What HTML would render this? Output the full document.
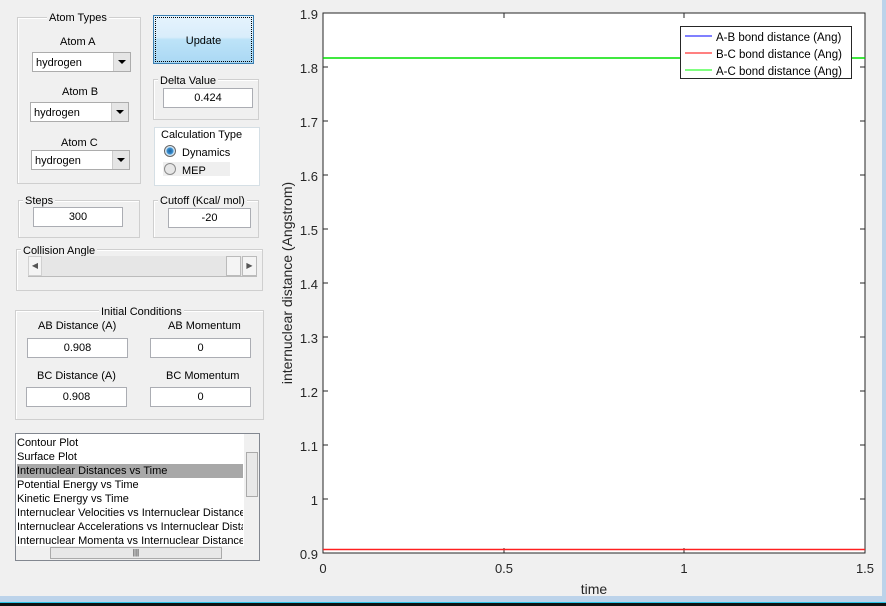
<!DOCTYPE html>
<html><head><style>
body{margin:0;width:886px;height:606px;background:#f0f0f0;font-family:"Liberation Sans",sans-serif;font-size:11px;color:#000;position:relative;overflow:hidden}
.a{position:absolute}
.g{position:absolute;border:1px solid #cfcfcf;box-shadow:inset 1px 1px 0 #fff}
.gt{position:absolute;background:#f0f0f0;padding:0 2px;white-space:nowrap}
.e{position:absolute;background:#fff;border:1px solid #abadb3;text-align:center;line-height:19px;height:18px}
.dd{position:absolute;background:#fff;border:1px solid #acacac;height:20px;line-height:21px;padding-left:3px;box-sizing:border-box}
.dd b{position:absolute;right:0;top:0;width:16px;height:18px;background:#e5e5e5;border-left:1px solid #ccc}
.dd b:after{content:"";position:absolute;left:4px;top:7px;border:4px solid transparent;border-top:4px solid #000;border-bottom:0}
.c{text-align:center}
</style></head><body>
<div class="g" style="left:17px;top:17px;width:122px;height:165px"></div>
<div class="gt" style="left:47px;top:12px">Atom Types</div>
<div class="a" style="left:60px;top:36px">Atom A</div>
<div class="dd" style="left:32px;top:52px;width:99px">hydrogen<b></b></div>
<div class="a" style="left:62px;top:86px">Atom B</div>
<div class="dd" style="left:30px;top:102px;width:99px">hydrogen<b></b></div>
<div class="a" style="left:61px;top:137px">Atom C</div>
<div class="dd" style="left:31px;top:150px;width:99px">hydrogen<b></b></div>
<div class="a c" style="left:153px;top:15px;width:101px;height:49px;border:1px solid #3c7fb1;background:linear-gradient(#e5f3fc 0,#d9edfb 45%,#bde3f8 50%,#aad8f4 100%);line-height:51px;box-sizing:border-box;outline:1px dotted #000;outline-offset:-3px">Update</div>
<div class="g" style="left:153px;top:79px;width:104px;height:39px"></div>
<div class="gt" style="left:158px;top:75px">Delta Value</div>
<div class="e" style="left:163px;top:88px;width:88px">0.424</div>
<div class="a" style="left:154px;top:127px;width:104px;height:57px;background:#fff;border:1px solid #d5dfe5"></div>
<div class="gt" style="left:159px;top:129px;background:#fff">Calculation Type</div>
<div class="a" style="left:164px;top:145px;width:12px;height:12px;border-radius:50%;background:radial-gradient(circle,#1d5f9a 0,#3a8fd0 3px,#cfe4f4 4px,#eee 6px);border:1px solid #666;box-sizing:border-box"></div>
<div class="a" style="left:182px;top:147px">Dynamics</div>
<div class="a" style="left:163px;top:162px;width:67px;height:14px;background:#efefef"></div>
<div class="a" style="left:164px;top:163px;width:12px;height:12px;border-radius:50%;background:#e6e6e6;border:1px solid #8a8a8a;box-sizing:border-box"></div>
<div class="a" style="left:182px;top:165px">MEP</div>
<div class="g" style="left:18px;top:200px;width:120px;height:36px"></div>
<div class="gt" style="left:23px;top:195px">Steps</div>
<div class="e" style="left:33px;top:207px;width:88px">300</div>
<div class="g" style="left:153px;top:200px;width:104px;height:36px"></div>
<div class="gt" style="left:158px;top:195px">Cutoff (Kcal/ mol)</div>
<div class="e" style="left:168px;top:208px;width:81px">-20</div>
<div class="g" style="left:16px;top:249px;width:245px;height:40px"></div>
<div class="gt" style="left:21px;top:245px">Collision Angle</div>
<div class="a" style="left:28px;top:256px;width:229px;height:20px;background:#e6e6e6;border-bottom:1px solid #bbb"></div>
<div class="a" style="left:28px;top:256px;width:14px;height:20px;background:#f4f4f4;border:1px solid #d0d0d0;box-sizing:border-box;font-size:8px;line-height:18px;text-align:center;color:#555">◀</div>
<div class="a" style="left:226px;top:256px;width:15px;height:20px;background:#f4f4f4;border:1px solid #bbb;box-sizing:border-box"></div>
<div class="a" style="left:242px;top:256px;width:15px;height:20px;background:#f4f4f4;border:1px solid #bbb;box-sizing:border-box;font-size:8px;line-height:18px;text-align:center;color:#555">▶</div>
<div class="g" style="left:15px;top:310px;width:247px;height:108px"></div>
<div class="gt" style="left:99px;top:306px">Initial Conditions</div>
<div class="a" style="left:38px;top:320px">AB Distance (A)</div>
<div class="a" style="left:168px;top:320px">AB Momentum</div>
<div class="e" style="left:27px;top:338px;width:99px">0.908</div>
<div class="e" style="left:150px;top:338px;width:99px">0</div>
<div class="a" style="left:37px;top:370px">BC Distance (A)</div>
<div class="a" style="left:166px;top:370px">BC Momentum</div>
<div class="e" style="left:26px;top:387px;width:99px">0.908</div>
<div class="e" style="left:150px;top:387px;width:99px">0</div>
<div class="a" style="left:15px;top:433px;width:245px;height:128px;background:#fff;border:1px solid #828790;box-sizing:border-box;overflow:hidden;line-height:14px">
<div style="position:absolute;left:1px;top:2px;width:226px;white-space:nowrap;overflow:hidden">
<div>Contour Plot</div><div>Surface Plot</div><div style="background:#a8a8a8">Internuclear Distances vs Time</div><div>Potential Energy vs Time</div><div>Kinetic Energy vs Time</div><div>Internuclear Velocities vs Internuclear Distance</div><div>Internuclear Accelerations vs Internuclear Distance</div><div>Internuclear Momenta vs Internuclear Distance</div></div>
<div style="position:absolute;left:228px;top:0;width:15px;height:112px;background:#f0f0f0"></div>
<div style="position:absolute;left:230px;top:18px;width:12px;height:45px;background:#e8e8e8;border:1px solid #aaa;box-sizing:border-box"></div>
<div style="position:absolute;left:0;top:112px;width:243px;height:14px;background:#f0f0f0"></div>
<div style="position:absolute;left:34px;top:113px;width:172px;height:12px;background:#e8e8e8;border:1px solid #aaa;box-sizing:border-box;font-size:8px;text-align:center;line-height:10px">|||</div>
</div>
<svg class="a" style="left:0;top:0" width="886" height="606" font-family="Liberation Sans, sans-serif" font-size="13">
<rect x="323" y="13" width="542" height="540" fill="#fff" stroke="#262626"/>
<g stroke="#262626">
<line x1="323" y1="67" x2="328" y2="67"/><line x1="323" y1="121" x2="328" y2="121"/><line x1="323" y1="175" x2="328" y2="175"/><line x1="323" y1="229" x2="328" y2="229"/><line x1="323" y1="283" x2="328" y2="283"/><line x1="323" y1="337" x2="328" y2="337"/><line x1="323" y1="391" x2="328" y2="391"/><line x1="323" y1="445" x2="328" y2="445"/><line x1="323" y1="499" x2="328" y2="499"/>
<line x1="865" y1="67" x2="860" y2="67"/><line x1="865" y1="121" x2="860" y2="121"/><line x1="865" y1="175" x2="860" y2="175"/><line x1="865" y1="229" x2="860" y2="229"/><line x1="865" y1="283" x2="860" y2="283"/><line x1="865" y1="337" x2="860" y2="337"/><line x1="865" y1="391" x2="860" y2="391"/><line x1="865" y1="445" x2="860" y2="445"/><line x1="865" y1="499" x2="860" y2="499"/>
<line x1="504" y1="553" x2="504" y2="548"/><line x1="684" y1="553" x2="684" y2="548"/><line x1="504" y1="13" x2="504" y2="18"/><line x1="684" y1="13" x2="684" y2="18"/>
</g>
<line x1="323" y1="58" x2="865" y2="58" stroke="#00e000" stroke-width="1.5"/>
<line x1="323" y1="549.5" x2="865" y2="549.5" stroke="#ff2020" stroke-width="1.5"/>
<g fill="#262626" text-anchor="end">
<text x="318" y="19">1.9</text><text x="318" y="73">1.8</text><text x="318" y="127">1.7</text><text x="318" y="181">1.6</text><text x="318" y="235">1.5</text><text x="318" y="289">1.4</text><text x="318" y="343">1.3</text><text x="318" y="397">1.2</text><text x="318" y="451">1.1</text><text x="318" y="505">1</text><text x="318" y="559">0.9</text>
</g>
<g fill="#262626" text-anchor="middle">
<text x="323" y="573">0</text><text x="504" y="573">0.5</text><text x="684" y="573">1</text><text x="865" y="573">1.5</text>
<text x="594" y="594" font-size="14">time</text>
<text transform="translate(292,283) rotate(-90)" font-size="14">internuclear distance (Angstrom)</text>
</g>
<rect x="680.5" y="26.5" width="171" height="52" fill="#fff" stroke="#262626"/>
<line x1="685" y1="36" x2="712" y2="36" stroke="#0000ff"/>
<line x1="685" y1="53" x2="712" y2="53" stroke="#ff0000"/>
<line x1="685" y1="70" x2="712" y2="70" stroke="#00ff00"/>
<g font-size="11.5" fill="#000"><text x="716" y="41">A-B bond distance (Ang)</text><text x="716" y="58">B-C bond distance (Ang)</text><text x="716" y="75">A-C bond distance (Ang)</text></g>
</svg>
<div class="a" style="left:882px;top:0;width:4px;height:606px;background:#bcd3ea"></div>
<div class="a" style="left:0;top:596px;width:886px;height:7px;background:#bcd3ea"></div>
<div class="a" style="left:0;top:602px;width:886px;height:1px;background:#29c4e8"></div>
<div class="a" style="left:0;top:603px;width:886px;height:3px;background:#111"></div>
</body></html>
